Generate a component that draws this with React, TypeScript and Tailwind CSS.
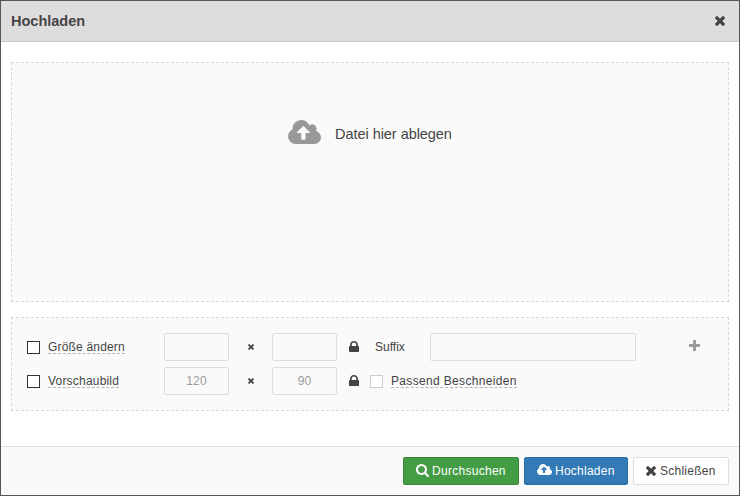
import type { ReactNode } from "react";

type IconProps = { className?: string };

function TimesIcon({ className }: IconProps) {
  return (
    <svg className={className} viewBox="302 366 1188 1188" preserveAspectRatio="none" fill="currentColor">
      <path d="M1490 1322q0 40-28 68l-136 136q-28 28-68 28t-68-28l-294-294-294 294q-28 28-68 28t-68-28l-136-136q-28-28-28-68t28-68l294-294-294-294q-28-28-28-68t28-68l136-136q28-28 68-28t68 28l294 294 294-294q28-28 68-28t68 28l136 136q28 28 28 68t-28 68l-294 294 294 294q28 28 28 68z" />
    </svg>
  );
}

function CloudUploadIcon({ className }: IconProps) {
  return (
    <svg className={className} viewBox="0 128 1920 1408" preserveAspectRatio="none" fill="currentColor">
      <path d="M1280 864q0-14-9-23l-352-352q-9-9-23-9t-23 9l-351 351q-10 12-10 24 0 14 9 23t23 9h224v352q0 13 9.5 22.5t22.5 9.5h192q13 0 22.5-9.5t9.5-22.5v-352h224q13 0 22.5-9.5t9.5-22.5zm640 288q0 159-112.5 271.5t-271.5 112.5h-1088q-185 0-316.5-131.5t-131.5-316.5q0-130 70-240t188-165q-2-30-2-43 0-212 150-362t362-150q156 0 285.5 87t188.5 231q71-62 166-62 106 0 181 75t75 181q0 76-41 138 130 31 213.5 135.5t83.5 238.5z" />
    </svg>
  );
}

function LockIcon({ className }: IconProps) {
  return (
    <svg className={className} viewBox="0 128 1152 1408" preserveAspectRatio="none" fill="currentColor">
      <path d="M320 768h512v-192q0-106-75-181t-181-75-181 75-75 181v192zm832 96v576q0 40-28 68t-68 28h-960q-40 0-68-28t-28-68v-576q0-40 28-68t68-28h32v-192q0-184 132-316t316-132 316 132 132 316v192h32q40 0 68 28t28 68z" />
    </svg>
  );
}

function PlusIcon({ className }: IconProps) {
  return (
    <svg className={className} viewBox="192 128 1408 1408" fill="currentColor">
      <path d="M1600 736v192q0 40-28 68t-68 28h-416v416q0 40-28 68t-68 28h-192q-40 0-68-28t-28-68v-416h-416q-40 0-68-28t-28-68v-192q0-40 28-68t68-28h416v-416q0-40 28-68t68-28h192q40 0 68 28t28 68v416h416q40 0 68 28t28 68z" />
    </svg>
  );
}

function SearchIcon({ className }: IconProps) {
  return (
    <svg className={className} viewBox="64 128 1664 1664" fill="currentColor">
      <path d="M1216 832q0-185-131.5-316.5t-316.5-131.5-316.5 131.5-131.5 316.5 131.5 316.5 316.5 131.5 316.5-131.5 131.5-316.5zm512 832q0 52-38 90t-90 38q-54 0-90-38l-343-342q-179 124-399 124-143 0-273.5-55.5t-225-150-150-225-55.5-273.5 55.5-273.5 150-225 225-150 273.5-55.5 273.5 55.5 225 150 150 225 55.5 273.5q0 220-124 399l343 343q37 37 37 90z" />
    </svg>
  );
}

function Checkbox({ className }: IconProps) {
  return <span role="checkbox" aria-checked="false" className={`block size-[13px] shrink-0 border bg-white ${className}`} />;
}

function Term({ className, children }: { className: string; children: ReactNode }) {
  return (
    <span className={`block h-[14px] whitespace-nowrap border-b border-dashed border-[#b4b4b4] leading-[14px] ${className}`}>
      {children}
    </span>
  );
}

function SizeFields({ w, h }: { w?: string; h?: string }) {
  const field =
    "flex h-7 w-[65px] items-center justify-center rounded-[2px] border border-[#dddddd] tracking-[0.15px] text-[#999999]";
  return (
    <>
      <div className={field}>{w}</div>
      <div className="flex w-[43px] justify-center">
        <TimesIcon className="size-[6px]" />
      </div>
      <div className={field}>{h}</div>
      <LockIcon className="mb-[2px] ml-3 h-[11px] w-[10px]" />
    </>
  );
}

export default function App() {
  return (
    <div className="flex h-[496px] w-[740px] flex-col border border-[#565656] bg-white font-['Liberation_Sans',Arial,sans-serif] text-[12px] text-[#444444]">
      <header className="flex h-[41px] shrink-0 items-center justify-between border-b border-[#c8c8c8] bg-[#dddddd] pr-[14px] pl-[10px]">
        <h1 className="mt-[2px] text-[14.5px] font-bold">Hochladen</h1>
        <TimesIcon className="mb-px size-[10px]" />
      </header>

      <main className="flex flex-1 flex-col px-[10px] pt-5">
        <section className="flex h-60 items-start justify-center border border-dashed border-[#d8d8d8] bg-[#fafafa] pt-[57px]">
          <CloudUploadIcon className="h-6 w-[33px] text-[#999999]" />
          <span className="ml-[14px] text-[14.5px] leading-[28px] tracking-[-0.05px]">Datei hier ablegen</span>
        </section>

        <section className="mt-[15px] h-[94px] border border-dashed border-[#d8d8d8] bg-[#fafafa] pt-[15px] pl-[15px]">
          <div className="flex h-7 items-center">
            <Checkbox className="border-[#333333]" />
            <div className="w-[124px] pl-2">
              <Term className="w-[77px] tracking-[0.18px]">Größe ändern</Term>
            </div>
            <SizeFields />
            <span className="ml-4 w-[55px]">Suffix</span>
            <div className="h-7 w-[206px] rounded-[2px] border border-[#dddddd]" />
            <PlusIcon className="mb-[3px] ml-[53px] size-[11px] text-[#999999]" />
          </div>
          <div className="mt-[6px] flex h-7 items-center">
            <Checkbox className="border-[#333333]" />
            <div className="w-[124px] pl-2">
              <Term className="w-[71px] tracking-[0.2px]">Vorschaubild</Term>
            </div>
            <SizeFields w="120" h="90" />
            <Checkbox className="ml-[11px] border-[#cccccc]" />
            <Term className="ml-2 w-[126px] tracking-[0.34px]">Passend Beschneiden</Term>
          </div>
        </section>
      </main>

      <footer className="flex h-[49px] shrink-0 justify-end gap-[5px] border-t border-[#dddddd] bg-[#fafafa] pt-[10px] pr-[10px]">
        <button className="flex h-7 w-[116px] items-center rounded-[2px] border border-[#398439] bg-[#449d44] pl-3 text-white">
          <SearchIcon className="mb-[2px] size-[13px]" />
          <span className="ml-[3px] tracking-[0.28px]">Durchsuchen</span>
        </button>
        <button className="flex h-7 w-[104px] items-center rounded-[2px] border border-[#2e6da4] bg-[#337ab7] pl-3 text-white">
          <CloudUploadIcon className="mb-[3px] h-[11px] w-[15px]" />
          <span className="ml-[3px] tracking-[0.25px]">Hochladen</span>
        </button>
        <button className="flex h-7 w-24 items-center rounded-[2px] border border-[#dddddd] bg-white pl-3">
          <TimesIcon className="mb-px size-[10px]" />
          <span className="ml-[4px] tracking-[0.25px]">Schließen</span>
        </button>
      </footer>
    </div>
  );
}
